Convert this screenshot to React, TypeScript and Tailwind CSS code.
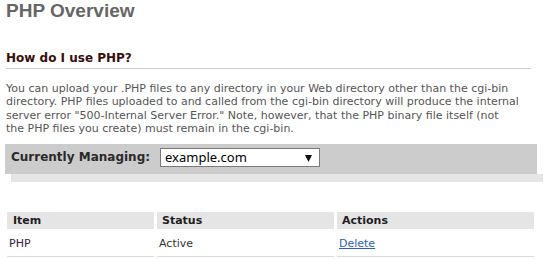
import React from "react";

// PHP overview page — control panel style

const rows = [{ item: "PHP", status: "Active", action: "Delete" }];

function ArrowDown() {
  return (
    <svg width="7" height="8" viewBox="0 0 7 8" className="shrink-0">
      <polygon points="0,1 7,1 3.5,8" fill="#111" />
    </svg>
  );
}

export default function App() {
  return (
    <div className="w-[548px] h-[259px] overflow-hidden bg-white font-['Verdana','DejaVu_Sans',sans-serif]">
      <div className="px-[6px] w-[537px]">
        <h1 className="font-['Liberation_Sans',Arial,sans-serif] font-bold text-[19px] leading-[22px] text-[#666]">
          PHP Overview
        </h1>

        <h2 className="mt-[28px] pb-[2px] text-[12px] leading-[16px] font-bold text-[#3a0d0d] border-b border-[#cccccc]">
          How do I use PHP?
        </h2>

        <p className="mt-[13px] text-[11px] leading-[13.3px] text-[#555]">
          <span className="block whitespace-nowrap">
            You can upload your .PHP files to any directory in your Web directory other than the cgi-bin
          </span>
          <span className="block whitespace-nowrap">
            directory. PHP files uploaded to and called from the cgi-bin directory will produce the internal
          </span>
          <span className="block whitespace-nowrap">
            server error "500-Internal Server Error." Note, however, that the PHP binary file itself (not
          </span>
          <span className="block whitespace-nowrap">
            the PHP files you create) must remain in the cgi-bin.
          </span>
        </p>
      </div>

      {/* Domain selector bar */}
      <div className="mt-[9px] ml-[5px] w-[532px] h-[30px] bg-[#cccccc] flex items-start pt-[4px] pl-[6px]">
        <span className="text-[12px] leading-[19px] font-bold text-[#2a2a2a] whitespace-nowrap">
          Currently Managing:
        </span>
        <div className="ml-[10px] w-[160px] h-[19px] bg-white border border-[#7a7a7a] flex items-center pl-[4px] pr-[7px]">
          <span className="flex-1 font-['Noto_Sans',sans-serif] text-[13px] leading-[17px] text-black">
            example.com
          </span>
          <ArrowDown />
        </div>
      </div>
      <div className="ml-[11px] w-[532px] h-[8px] bg-[#e5e5e5]" />

      {/* Items table */}
      <table className="mt-[27px] ml-[4px] w-[533px] table-fixed border-separate border-spacing-[3px] text-[11px]">
        <thead>
          <tr>
            <th className="w-[147px] h-[17px] p-0 pl-[6px] bg-[#e5e5e5] text-left font-bold text-[#1e1e1e] leading-[17px]">
              Item
            </th>
            <th className="w-[177px] h-[17px] p-0 pl-[5px] bg-[#e5e5e5] text-left font-bold text-[#1e1e1e] leading-[17px]">
              Status
            </th>
            <th className="w-[197px] h-[17px] p-0 pl-[5px] bg-[#e5e5e5] text-left font-bold text-[#1e1e1e] leading-[17px]">
              Actions
            </th>
          </tr>
        </thead>
        <tbody>
          {rows.map((r) => (
            <tr key={r.item}>
              <td className="h-[25px] p-0 pl-[2px] border-b border-[#dcdcdc] text-[#3a1840]">{r.item}</td>
              <td className="h-[25px] p-0 pl-[2px] border-b border-[#dcdcdc] text-[#333]">{r.status}</td>
              <td className="h-[25px] p-0 pl-[2px] border-b border-[#dcdcdc]">
                <a href="#" className="text-[#2c5fbf] underline">
                  {r.action}
                </a>
              </td>
            </tr>
          ))}
        </tbody>
      </table>
    </div>
  );
}
